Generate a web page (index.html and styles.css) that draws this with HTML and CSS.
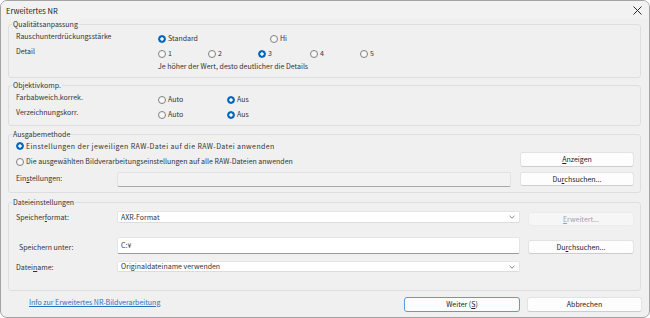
FILE: index.html
```html
<!DOCTYPE html>
<html lang="de">
<head>
    <meta charset="UTF-8">
    <title>Erweitertes NR</title>
    <link rel="stylesheet" href="styles.css">
</head>
<body>
    <div class="window">
        <div class="titlebar">
            <span class="title">Erweitertes NR</span>
            <svg class="close" width="9" height="9" viewBox="0 0 9 9"><path d="M0.5 0.5L8.5 8.5M8.5 0.5L0.5 8.5" stroke="#2b2b2b" stroke-width="1"/></svg>
        </div>

        <!-- Qualitaet -->
        <fieldset class="group quality">
            <legend>Qualitätsanpassung</legend>
            <div class="row">
                <span class="label">Rauschunterdrückungsstärke</span>
                <label class="radio on w112"><i></i>Standard</label>
                <label class="radio"><i></i>Hi</label>
            </div>
            <div class="row">
                <span class="label">Detail</span>
                <label class="radio w50"><i></i>1</label>
                <label class="radio w50"><i></i>2</label>
                <label class="radio on w52"><i></i>3</label>
                <label class="radio w50"><i></i>4</label>
                <label class="radio"><i></i>5</label>
            </div>
            <div class="note">Je höher der Wert, desto deutlicher die Details</div>
        </fieldset>

        <!-- Objektiv -->
        <fieldset class="group lens">
            <legend>Objektivkomp.</legend>
            <div class="row">
                <span class="label">Farbabweich.korrek.</span>
                <label class="radio w69"><i></i>Auto</label>
                <label class="radio on"><i></i>Aus</label>
            </div>
            <div class="row">
                <span class="label">Verzeichnungskorr.</span>
                <label class="radio w69"><i></i>Auto</label>
                <label class="radio on"><i></i>Aus</label>
            </div>
        </fieldset>

        <!-- Ausgabe -->
        <fieldset class="group output">
            <legend>Ausgabemethode</legend>
            <div class="out-grid">
                <label class="radio on first"><i></i>Einstellungen der jeweiligen RAW-Datei auf die RAW-Datei anwenden</label>
                <label class="radio second"><i></i>Die ausgewählten Bildverarbeitungseinstellungen auf alle RAW-Dateien anwenden</label>
                <span class="btn show"><u>A</u>nzeigen</span>
                <div class="set-row">
                    <span class="flabel">Ein<u>s</u>tellungen:</span>
                    <span class="field disabled"></span>
                </div>
                <span class="btn browse1">Du<u>r</u>chsuchen...</span>
            </div>
        </fieldset>

        <!-- Datei -->
        <fieldset class="group files">
            <legend>Dateieinstellungen</legend>
            <div class="file-grid">
                <span class="flabel">Speicher<u>f</u>ormat:</span>
                <span class="field select sel1">AXR-Format<svg width="6" height="4" viewBox="0 0 6 4"><path d="M0.5 0.8L3 3.2L5.5 0.8" fill="none" stroke="#777" stroke-width="0.9"/></svg></span>
                <span class="btn off"><u>E</u>rweitert...</span>

                <span class="flabel indent">Speichern unter:</span>
                <span class="field path">C:¥</span>
                <span class="btn browse2">Du<u>r</u>chsuchen...</span>

                <span class="flabel last">Datei<u>n</u>ame:</span>
                <span class="field select sel2">Originaldateiname verwenden<svg width="6" height="4" viewBox="0 0 6 4"><path d="M0.5 0.8L3 3.2L5.5 0.8" fill="none" stroke="#777" stroke-width="0.9"/></svg></span>
                <span></span>
            </div>
        </fieldset>

        <div class="footer">
            <a class="link" href="">Info zur Erweitertes NR-Bildverarbeitung</a>
            <div class="actions">
                <span class="btn main">Weiter (<u>S</u>)</span>
                <span class="btn">Abbrechen</span>
            </div>
        </div>
    </div>
</body>
</html>
```

FILE: styles.css
```css
*{
    margin:0;
    padding:0;
    box-sizing:border-box;
}
body{
    background:#fff;
    font-family:"Noto Sans CJK JP","Noto Sans",sans-serif;
    font-size:7px;
    line-height:11px;
    color:#333;
}
.window{
    width:650px;
    height:318px;
    background:#f0f0f0;
    border:1px solid #a3a3a3;
    border-radius:7px;
    overflow:hidden;
    display:flex;
    flex-direction:column;
}
.titlebar{
    height:18px;
    display:flex;
    align-items:center;
    justify-content:space-between;
    padding:0 7px 0 5px;
    background:#f2f2f3;
    font-size:7.5px;
    color:#1c1c1c;
}

/* group boxes */
.group{
    margin:0 8px 0 7px;
    padding:0 6px 0 7px;
    border:1px solid #dedede;
    border-radius:3px;
    flex:none;
}
.group legend{
    margin-left:-4px;
    padding:0 1px;
    line-height:10px;
    height:10px;
}
.quality{
    height:59px;
    padding-top:2px;
}
.lens{
    height:46px;
    margin-top:2px;
    padding-top:2px;
}
.output{
    height:64px;
    margin-top:3px;
    padding-top:1px;
}
.files{
    height:94px;
    margin-top:4px;
    padding-top:4px;
}

.row{
    display:flex;
    align-items:center;
    height:15px;
}
.quality .row + .row{
    height:14px;
    padding-top:1px;
}
.label{
    width:142px;
    padding-bottom:4px;
    flex:none;
}
.note{
    height:12px;
    line-height:12px;
    padding-left:142px;
}

/* radio buttons */
.radio{
    display:inline-flex;
    align-items:center;
    white-space:nowrap;
}
.radio i{
    width:8px;
    height:8px;
    border:1px solid #808080;
    border-radius:50%;
    background:#f7f7f7;
    margin-right:2px;
    flex:none;
}
.radio.on i{
    border-color:#0067c0;
    background:radial-gradient(circle,#fff 0 1.4px,#0067c0 1.9px);
}
.w112{width:112px;}
.w50{width:50px;}
.w52{width:52px;}
.w69{width:69px;}

/* fields and buttons */
.field{
    display:flex;
    align-items:center;
    background:#fff;
    border:1px solid #e4e4e4;
    border-bottom-color:#9c9c9c;
    border-radius:2px;
    padding:0 3px;
}
.field.disabled{
    background:#f2f2f2;
    border-color:#e3e3e3;
    border-bottom-color:#a8a8a8;
}
.select{
    justify-content:space-between;
    border-bottom-color:#dcdcdc;
}
.select svg{
    margin-right:1px;
}
.btn{
    display:flex;
    align-items:center;
    justify-content:center;
    background:#fdfdfd;
    border:1px solid #e3e3e3;
    border-bottom-color:#cdcdcd;
    border-radius:3px;
    color:#222;
}
.btn.off{
    background:#f6f6f6;
    border-color:#ececec;
    color:#a2a2a2;
}
.flabel{
    white-space:nowrap;
}
.indent{
    padding-left:3px;
}

.out-grid{
    display:grid;
    grid-template-columns:1fr 114px;
    grid-template-rows:12px 20px 15px;
    column-gap:9px;
}
.out-grid .first{
    grid-column:1 / 3;
    letter-spacing:0.4px;
}
.out-grid .second{
    align-self:start;
    margin-top:4px;
}
.out-grid .show{
    height:15px;
    align-self:start;
}
.set-row{
    display:flex;
    align-items:center;
}
.set-row .flabel{
    width:101px;
    padding-bottom:2px;
}
.set-row .field{
    flex:1;
    height:15px;
}
.browse1{
    height:14px;
}

/* file settings: rows end at 227 / 255 / 273 */
.file-grid{
    display:grid;
    grid-template-columns:101px 1fr 114px;
    grid-template-rows:16px 28px 18px;
    align-items:end;
}
.file-grid .btn{
    margin-left:8px;
}
.file-grid .flabel{
    margin-bottom:4px;
}
.file-grid .flabel.indent{
    margin-bottom:2px;
}
.file-grid .flabel.last{
    margin-bottom:0;
}
.file-grid .off{
    height:14px;
    margin-bottom:1px;
}
.sel1{
    height:12px;
    margin-bottom:4px;
}
.path{
    height:17px;
    margin-bottom:1px;
}
.browse2{
    height:14px;
    margin-bottom:1px;
}
.sel2{
    height:11px;
    margin-bottom:1px;
}

/* footer */
.footer{
    flex:1;
    display:flex;
    align-items:center;
    justify-content:space-between;
    padding:0 7px 0 28px;
}
.link{
    color:#2a6fc4;
    text-decoration:underline;
    padding-bottom:4px;
}
.actions{
    display:flex;
    gap:7px;
}
.actions .btn{
    width:115px;
    height:15px;
}
.actions .main{
    width:116px;
    border-color:#5f9ad6;
}
```
